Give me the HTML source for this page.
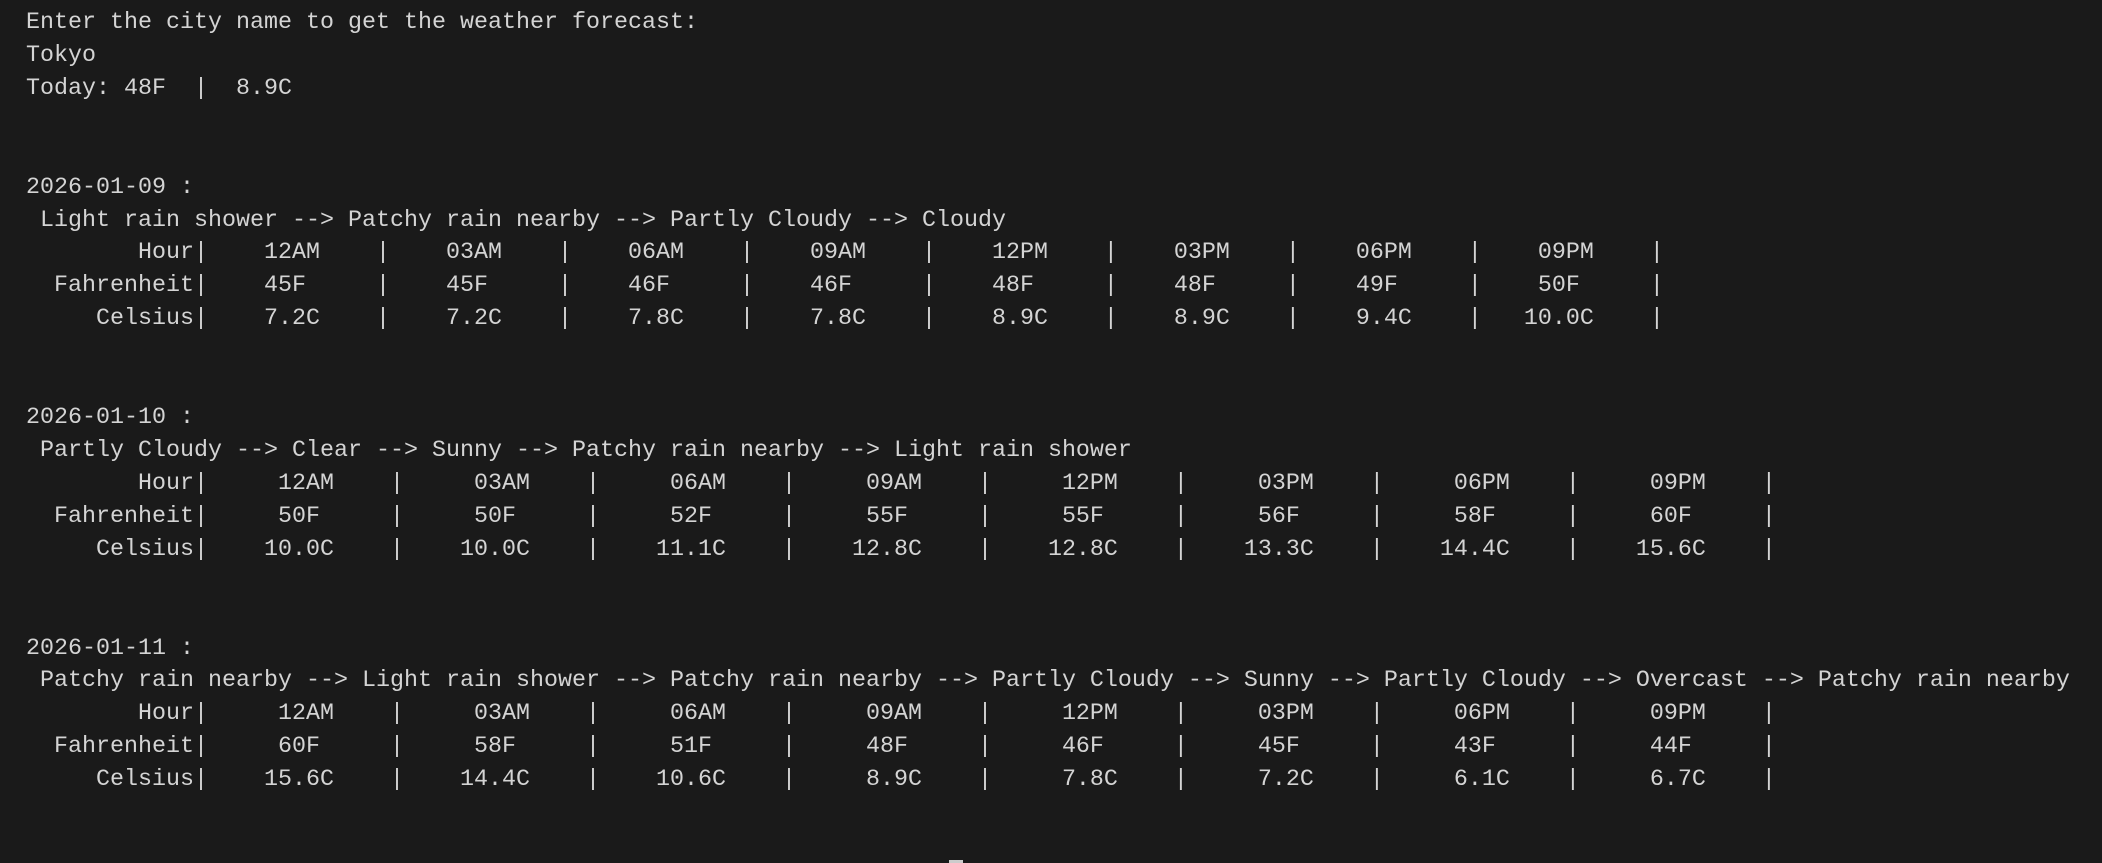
<!DOCTYPE html>
<html><head><meta charset="utf-8"><style>
html,body{margin:0;padding:0;background:#1a1a1a;width:2102px;height:863px;overflow:hidden}
pre{position:absolute;left:26px;top:7px;margin:0;font-family:"Liberation Mono",monospace;font-size:23.33px;line-height:32.92px;color:#d4d4d4;white-space:pre}
.cur{position:absolute;left:949px;top:860px;width:14px;height:3px;background:#cccccc}
</style></head><body>
<pre>Enter the city name to get the weather forecast:
Tokyo
Today: 48F  |  8.9C


2026-01-09 :
 Light rain shower --&gt; Patchy rain nearby --&gt; Partly Cloudy --&gt; Cloudy
        Hour|    12AM    |    03AM    |    06AM    |    09AM    |    12PM    |    03PM    |    06PM    |    09PM    |
  Fahrenheit|    45F     |    45F     |    46F     |    46F     |    48F     |    48F     |    49F     |    50F     |
     Celsius|    7.2C    |    7.2C    |    7.8C    |    7.8C    |    8.9C    |    8.9C    |    9.4C    |   10.0C    |


2026-01-10 :
 Partly Cloudy --&gt; Clear --&gt; Sunny --&gt; Patchy rain nearby --&gt; Light rain shower
        Hour|     12AM    |     03AM    |     06AM    |     09AM    |     12PM    |     03PM    |     06PM    |     09PM    |
  Fahrenheit|     50F     |     50F     |     52F     |     55F     |     55F     |     56F     |     58F     |     60F     |
     Celsius|    10.0C    |    10.0C    |    11.1C    |    12.8C    |    12.8C    |    13.3C    |    14.4C    |    15.6C    |


2026-01-11 :
 Patchy rain nearby --&gt; Light rain shower --&gt; Patchy rain nearby --&gt; Partly Cloudy --&gt; Sunny --&gt; Partly Cloudy --&gt; Overcast --&gt; Patchy rain nearby
        Hour|     12AM    |     03AM    |     06AM    |     09AM    |     12PM    |     03PM    |     06PM    |     09PM    |
  Fahrenheit|     60F     |     58F     |     51F     |     48F     |     46F     |     45F     |     43F     |     44F     |
     Celsius|    15.6C    |    14.4C    |    10.6C    |     8.9C    |     7.8C    |     7.2C    |     6.1C    |     6.7C    |
</pre>
<div class="cur"></div>
</body></html>
